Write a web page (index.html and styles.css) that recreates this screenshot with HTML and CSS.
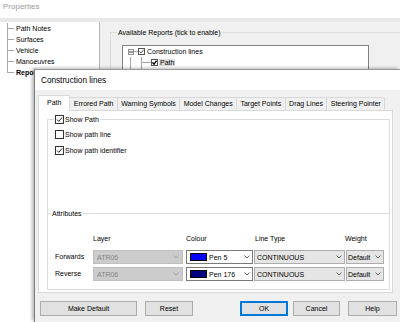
FILE: index.html
```html
<!DOCTYPE html>
<html>
<head>
<meta charset="utf-8">
<link rel="stylesheet" href="styles.css">
</head>
<body>
<div class="desk">
  <div class="props">
    <div class="props-title">Properties</div>
    <div class="props-band"></div>
    <div class="props-body">
      <div class="navtree">
        <div class="nav-item">Path Notes</div>
        <div class="nav-item">Surfaces</div>
        <div class="nav-item">Vehicle</div>
        <div class="nav-item">Manoeuvres</div>
        <div class="nav-item last bold">Reports</div>
      </div>
      <div class="reports">
        <fieldset class="avail">
          <legend>Available Reports (tick to enable)</legend>
          <div class="rtree">
            <div class="rrow r1">
              <span class="exp"><svg width="4" height="4" viewBox="0 0 4 4"><line x1="0" y1="2" x2="4" y2="2" stroke="#333" stroke-width="1"/></svg></span>
              <span class="hline"></span>
              <span class="tcb"><svg width="5" height="5" viewBox="0 0 5 5"><polyline points="0.5,2.5 2,4 4.5,0.8" fill="none" stroke="#444" stroke-width="0.9"/></svg></span>
              <span class="rtext">Construction lines</span>
            </div>
            <div class="rrow r2">
              <i class="vl"></i>
              <span class="tcb"><svg width="5" height="5" viewBox="0 0 5 5"><polyline points="0.4,2.4 2,4.1 4.6,0.6" fill="none" stroke="#000" stroke-width="1.5"/></svg></span>
              <span class="rtext sel">Path</span>
            </div>
            <div class="rrow r2">
              <i class="vl"></i>
              <span class="tcb"><svg width="5" height="5" viewBox="0 0 5 5"><polyline points="0.4,2.4 2,4.1 4.6,0.6" fill="none" stroke="#000" stroke-width="1.5"/></svg></span>
              <span class="rtext">Errored Path</span>
            </div>
          </div>
        </fieldset>
      </div>
    </div>
  </div>

  <div class="dialog">
    <div class="dlg-title">Construction lines</div>
    <div class="dlg-body">
      <div class="tabs">
        <div class="tab sel">Path</div>
        <div class="tab">Errored Path</div>
        <div class="tab">Warning Symbols</div>
        <div class="tab">Model Changes</div>
        <div class="tab">Target Points</div>
        <div class="tab">Drag Lines</div>
        <div class="tab">Steering Pointer</div>
      </div>
      <div class="panel">
        <fieldset class="showpath">
          <legend class="cblegend">
            <span class="cb"><svg width="7" height="7" viewBox="0 0 7 7"><polyline points="1,3.6 2.8,5.4 6.1,1.4" fill="none" stroke="#222" stroke-width="1"/></svg></span>
            <span class="cbl">Show Path</span>
          </legend>
          <div class="cbrow">
            <span class="cb"></span>
            <span class="cbl">Show path line</span>
          </div>
          <div class="cbrow">
            <span class="cb"><svg width="7" height="7" viewBox="0 0 7 7"><polyline points="1,3.6 2.8,5.4 6.1,1.4" fill="none" stroke="#222" stroke-width="1"/></svg></span>
            <span class="cbl">Show path identifier</span>
          </div>
        </fieldset>
        <fieldset class="attrs">
          <legend>Attributes</legend>
          <div class="agrid">
            <span></span>
            <span class="hd">Layer</span>
            <span class="hd">Colour</span>
            <span class="hd hd-lt">Line Type</span>
            <span class="hd hd-w">Weight</span>

            <span class="rlab">Forwards</span>
            <div class="combo layer"><span class="val">ATR06</span><svg class="arr" width="6" height="4" viewBox="0 0 6 4"><polyline points="0.5,0.5 3,3 5.5,0.5" fill="none" stroke="#9a9a9a" stroke-width="0.9"/></svg></div>
            <div class="combo colour"><span class="sw sw-blue"></span><span class="val">Pen 5</span><svg class="arr" width="6" height="4" viewBox="0 0 6 4"><polyline points="0.5,0.5 3,3 5.5,0.5" fill="none" stroke="#555" stroke-width="0.9"/></svg></div>
            <div class="combo ltype"><span class="val">CONTINUOUS</span><svg class="arr" width="6" height="4" viewBox="0 0 6 4"><polyline points="0.5,0.5 3,3 5.5,0.5" fill="none" stroke="#555" stroke-width="0.9"/></svg></div>
            <div class="combo weight"><span class="val">Default</span><svg class="arr" width="6" height="4" viewBox="0 0 6 4"><polyline points="0.5,0.5 3,3 5.5,0.5" fill="none" stroke="#555" stroke-width="0.9"/></svg></div>

            <span class="rlab">Reverse</span>
            <div class="combo layer"><span class="val">ATR06</span><svg class="arr" width="6" height="4" viewBox="0 0 6 4"><polyline points="0.5,0.5 3,3 5.5,0.5" fill="none" stroke="#9a9a9a" stroke-width="0.9"/></svg></div>
            <div class="combo colour"><span class="sw sw-navy"></span><span class="val">Pen 176</span><svg class="arr" width="6" height="4" viewBox="0 0 6 4"><polyline points="0.5,0.5 3,3 5.5,0.5" fill="none" stroke="#555" stroke-width="0.9"/></svg></div>
            <div class="combo ltype"><span class="val">CONTINUOUS</span><svg class="arr" width="6" height="4" viewBox="0 0 6 4"><polyline points="0.5,0.5 3,3 5.5,0.5" fill="none" stroke="#555" stroke-width="0.9"/></svg></div>
            <div class="combo weight"><span class="val">Default</span><svg class="arr" width="6" height="4" viewBox="0 0 6 4"><polyline points="0.5,0.5 3,3 5.5,0.5" fill="none" stroke="#555" stroke-width="0.9"/></svg></div>
          </div>
        </fieldset>
      </div>
      <div class="btns">
        <div class="btn b-make">Make Default</div>
        <div class="btn b-reset">Reset</div>
        <div class="btn b-ok">OK</div>
        <div class="btn b-cancel">Cancel</div>
        <div class="btn b-help">Help</div>
      </div>
    </div>
  </div>
</div>
</body>
</html>
```

FILE: styles.css
```css
* { box-sizing: border-box; }
html, body { margin: 0; padding: 0; }
body {
  width: 400px;
  height: 322px;
  overflow: hidden;
  font-family: "Liberation Sans", Arial, sans-serif;
  font-size: 7px;
  color: #000;
  background: #f0f0f0;
}
.desk { position: relative; width: 400px; height: 322px; overflow: hidden; }

/* background Properties window */
.props { display: flex; flex-direction: column; height: 100%; }
.props-title {
  height: 18px;
  background: #fff;
  color: #9a9a9a;
  font-size: 8px;
  line-height: 14px;
  padding-left: 3px;
}
.props-band { height: 4px; background: #e8e8e8; }
.props-body { flex: 1; display: flex; background: #f0f0f0; min-height: 0; }
.navtree {
  width: 100px;
  background: #fff;
  border-right: 1px solid #b4b4b4;
  padding-top: 1px;
}
.nav-item {
  position: relative;
  height: 11px;
  line-height: 11px;
  padding-left: 16px;
  white-space: nowrap;
}
.nav-item::before {
  content: "";
  position: absolute;
  left: 7px;
  top: 5px;
  width: 7px;
  border-top: 1px solid #a8a8a8;
}
.nav-item::after {
  content: "";
  position: absolute;
  left: 7px;
  top: 0;
  height: 11px;
  border-left: 1px solid #a8a8a8;
}
.nav-item.last::after { height: 6px; }
.nav-item.bold { font-weight: bold; }

.reports { flex: 1; min-width: 0; padding: 6px 0 0 10px; }
fieldset { margin: 0; min-width: 0; }
legend { padding: 0 1px; line-height: 9px; height: 9px; }
.avail {
  margin-right: -30px;
  padding: 8px 0 0 6px;
  border: 1px solid #dcdcdc;
  height: 80px;
}
.rtree {
  margin-left: 5px;
  width: 247px;
  height: 40px;
  border: 1px solid #828282;
  background: #fff;
}
.rrow {
  position: relative;
  display: flex;
  align-items: center;
  height: 11px;
  white-space: nowrap;
}
.exp {
  display: flex;
  align-items: center;
  justify-content: center;
  width: 6px;
  height: 6px;
  margin-left: 5px;
  border: 1px solid #919191;
  background: #fff;
}
.hline { width: 4px; border-top: 1px solid #a8a8a8; }
.tcb {
  display: flex;
  align-items: center;
  justify-content: center;
  width: 7px;
  height: 7px;
  border: 1px solid #555;
  background: #fff;
}
.rtext { margin-left: 2px; }
.rtext.sel { margin-left: 1px; padding: 0 1px; background: #dedede; }
.r2 { padding-left: 28px; }
.r2::before {
  content: "";
  position: absolute;
  left: 18px;
  top: 0;
  height: 11px;
  border-left: 1px solid #a8a8a8;
}
.r2::after {
  content: "";
  position: absolute;
  left: 18px;
  top: 5px;
  width: 10px;
  border-top: 1px solid #a8a8a8;
}
.vl {
  position: absolute;
  left: 7px;
  top: 0;
  height: 11px;
  border-left: 1px solid #a8a8a8;
}

/* dialog */
.dialog {
  position: absolute;
  left: 34px;
  top: 69px;
  right: 0;
  bottom: 0;
  display: flex;
  flex-direction: column;
  background: #f0f0f0;
  border-left: 1px solid #7c7c7c;
  border-top: 1px solid #9a9a9a;
  box-shadow: -2px -1px 3px rgba(0, 0, 0, 0.28);
}
.dlg-title {
  height: 20px;
  background: #fff;
  font-size: 8.2px;
  line-height: 22px;
  padding-left: 6px;
}
.dlg-body { padding: 5px 3px 0 3px; }
.tabs { display: flex; align-items: flex-end; height: 15px; }
.tab {
  height: 13px;
  line-height: 12px;
  padding: 0 3.4px;
  margin-left: -1px;
  border: 1px solid #d9d9d9;
  border-bottom: none;
  background: #f0f0f0;
  white-space: nowrap;
}
.tab.sel {
  position: relative;
  z-index: 1;
  height: 16px;
  margin-bottom: -1px;
  margin-left: 0;
  padding: 0 8px;
  line-height: 13px;
  background: #fff;
}
.panel {
  height: 183px;
  margin-right: 4px;
  background: #fff;
  border: 1px solid #d9d9d9;
  padding: 4px 2px 0 8px;
}
.showpath {
  height: 98px;
  padding: 2px 0 0 6px;
  border: 1px solid #dcdcdc;
  border-bottom: none;
}
.cblegend { display: flex; align-items: center; }
.cb {
  display: flex;
  align-items: center;
  justify-content: center;
  width: 9px;
  height: 9px;
  border: 1px solid #333;
  background: #fff;
  flex: none;
}
.cbl { margin-left: 1px; white-space: nowrap; }
.cbrow {
  display: flex;
  align-items: center;
  height: 16px;
  padding-left: 1px;
}
.attrs {
  margin-top: -4px;
  padding: 16px 0 8px 3px;
  border: 1px solid #dcdcdc;
}
.agrid {
  margin-left: 4px;
  display: grid;
  grid-template-columns: 38px 93px 68px 92px 38px;
  grid-template-rows: 13px 14px 14px;
  row-gap: 3px;
}
.hd { align-self: start; line-height: 10px; white-space: nowrap; }
.hd-lt { padding-left: 1px; }
.hd-w { margin-left: -1px; }
.rlab { line-height: 14px; white-space: nowrap; }
.combo {
  display: flex;
  align-items: center;
  height: 14px;
  border: 1px solid #adadad;
  padding-left: 3px;
  white-space: nowrap;
}
.combo .val { flex: 1; overflow: hidden; }
.combo .arr { flex: none; margin-right: 2px; }
.combo.layer { width: 90px; background: #cccccc; border-color: #bfbfbf; color: #858585; }
.combo.layer .arr { margin-right: 3px; }
.combo.colour { width: 67px; background: #fff; border-color: #7a7a7a; }
.combo.ltype { width: 91px; background: #e5e5e5; padding-left: 2px; }
.combo.weight { width: 38px; background: #e5e5e5; padding-left: 1px; }
.sw {
  flex: none;
  width: 17px;
  height: 8px;
  margin-right: 2px;
  border: 1px solid #000;
}
.sw-blue { background: #0000ff; }
.sw-navy { background: #000080; }

.btns { display: flex; margin-top: 8px; padding-left: 2px; }
.btn {
  height: 15px;
  border: 1px solid #adadad;
  background: #e1e1e1;
  text-align: center;
  line-height: 13px;
  white-space: nowrap;
}
.b-make { width: 97px; }
.b-reset { width: 48px; margin-left: 8px; }
.b-ok {
  width: 48px;
  margin-left: auto;
  border-color: #0078d7;
  box-shadow: inset 0 0 0 1px #0078d7;
}
.b-cancel { width: 47px; margin-left: 5px; }
.b-help { width: 49px; margin-left: 8px; }
```
